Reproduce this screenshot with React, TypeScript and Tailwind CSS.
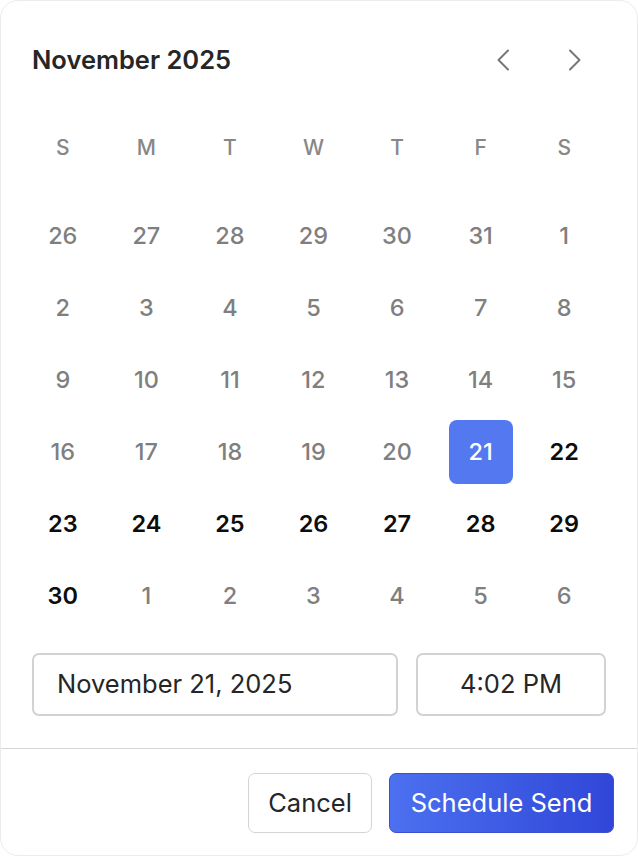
import React from 'react';

const weekdays = ['S', 'M', 'T', 'W', 'T', 'F', 'S'];

type Day = { n: number; active: boolean };

const days: Day[] = [
  ...[26, 27, 28, 29, 30, 31].map(n => ({ n, active: false })),
  ...Array.from({ length: 20 }, (_, i) => ({ n: i + 1, active: false })),
  ...Array.from({ length: 10 }, (_, i) => ({ n: i + 21, active: true })),
  ...[1, 2, 3, 4, 5, 6].map(n => ({ n, active: false })),
];

const Chevron = ({ dir }: { dir: 'left' | 'right' }) => (
  <svg width="14" height="22" viewBox="0 0 14 22" fill="none">
    <path
      d={dir === 'left' ? 'M12 1.5 L2.5 11 L12 20.5' : 'M2 1.5 L11.5 11 L2 20.5'}
      stroke="#777"
      strokeWidth="2"
      strokeLinecap="round"
      strokeLinejoin="round"
    />
  </svg>
);

export default function App() {
  return (
    <div className="w-[638px] h-[856px] bg-white" style={{ fontFamily: 'Inter, "Noto Sans", sans-serif' }}>
      <div className="flex flex-col h-full rounded-[18px] border border-[#ececec] bg-white overflow-hidden">
        {/* Header */}
        <div className="mt-[39px] h-[40px] flex items-center justify-between pl-[31px] pr-[42px]">
          <h2 className="text-[25.5px] font-semibold text-[#262626]">November 2025</h2>
          <div className="flex items-center gap-[32px]">
            <button className="w-10 h-10 flex items-center justify-center">
              <Chevron dir="left" />
            </button>
            <button className="w-10 h-10 flex items-center justify-center">
              <Chevron dir="right" />
            </button>
          </div>
        </div>

        {/* Weekdays */}
        <div className="mt-[48px] ml-[20px] w-[585px] grid grid-cols-7 h-[40px]">
          {weekdays.map((d, i) => (
            <div key={i} className="flex items-center justify-center text-[21px] font-medium text-[#878787]">
              {d}
            </div>
          ))}
        </div>

        {/* Days */}
        <div className="mt-[36px] ml-[20px] w-[585px] grid grid-cols-7 gap-y-[8px]">
          {days.map((d, i) => {
            const selected = d.active && d.n === 21;
            return (
              <div key={i} className="flex justify-center">
                <div
                  className={`w-[64px] h-[64px] flex items-center justify-center rounded-[8px] text-[23.5px] ${
                    selected
                      ? 'bg-[#5378ef] text-white font-medium'
                      : d.active
                      ? 'text-[#0d0d0d] font-semibold'
                      : 'text-[#7f7f7f] font-medium'
                  }`}
                >
                  {d.n}
                </div>
              </div>
            );
          })}
        </div>

        {/* Inputs */}
        <div className="mt-[25px] px-[31px] flex gap-[18px]">
          <div className="flex-1 h-[63px] rounded-[7px] border-2 border-[#d2d2d2] flex items-center pl-[23px] text-[25.5px] text-[#262626]">
            November 21, 2025
          </div>
          <div className="w-[190px] h-[63px] rounded-[7px] border-2 border-[#d2d2d2] flex items-center justify-center text-[25.5px] text-[#262626]">
            4:02 PM
          </div>
        </div>

        <div className="mt-[32px] h-px bg-[#d6d6d6]" />

        {/* Footer */}
        <div className="flex justify-end gap-[17px] pt-[24px] pr-[23px]">
          <button className="h-[60px] w-[124px] rounded-[7px] border border-[#d4d4d4] bg-white text-[25.5px] text-[#262626]">
            Cancel
          </button>
          <button className="h-[60px] w-[225px] rounded-[7px] bg-gradient-to-r from-[#4c70f0] to-[#3146d8] border border-[#3a4fd8] text-[25.5px] text-white">
            Schedule Send
          </button>
        </div>
      </div>
    </div>
  );
}
